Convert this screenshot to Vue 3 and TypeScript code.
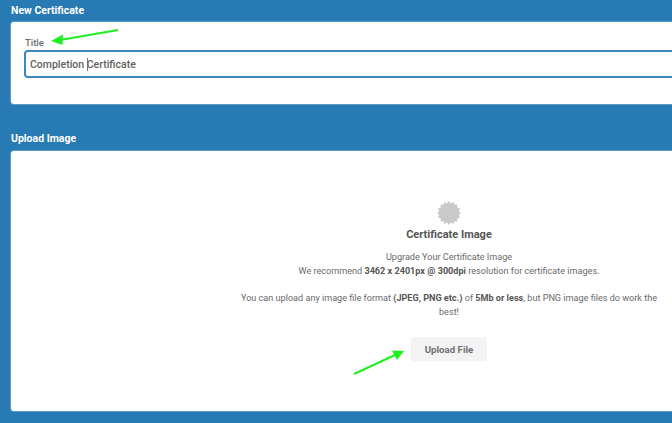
<script setup lang="ts">
const cx = 12
const cy = 12
const count = 16
const sealPoints: string = Array.from({ length: count * 2 }, (_, i) => {
  const r = i % 2 === 0 ? 12 : 9.8
  const a = (Math.PI * i) / count - Math.PI / 2
  return `${(cx + r * Math.cos(a)).toFixed(2)},${(cy + r * Math.sin(a)).toFixed(2)}`
}).join(' ')
</script>

<template>
  <div class="page">
    <h2 class="heading first">New Certificate</h2>
    <section class="card title-card">
      <label class="label">Title</label>
      <div class="input">
        <span>Completion </span><span class="caret"></span><span>Certificate</span>
      </div>
    </section>

    <h2 class="heading second">Upload Image</h2>
    <section class="card upload-card">
      <svg class="seal" width="24" height="24" viewBox="0 0 24 24">
        <polygon :points="sealPoints" fill="#c9c9c9" />
      </svg>
      <h3 class="upload-title">Certificate Image</h3>
      <p class="line">Upgrade Your Certificate Image</p>
      <p class="line">We recommend <b>3462 x 2401px @ 300dpi</b> resolution for certificate images.</p>
      <p class="line para">You can upload any image file format <b>(JPEG, PNG etc.)</b> of <b>5Mb or less</b>, but PNG image files do work the best!</p>
      <button class="upload-btn" type="button">Upload File</button>
    </section>

    <svg class="arrow-layer" width="672" height="423" viewBox="0 0 672 423">
      <g stroke="#1fee1f" fill="#1fee1f">
        <line x1="118" y1="30" x2="60" y2="40" stroke-width="2" />
        <polygon points="51,41 63,34.5 62.5,45" stroke="none" />
        <line x1="354" y1="374" x2="395" y2="355" stroke-width="2" />
        <polygon points="404,351 392,350.5 397,360" stroke="none" />
      </g>
    </svg>
  </div>
</template>

<style>
html, body { margin: 0; padding: 0; }
</style>

<style scoped>
.page {
  position: relative;
  width: 672px;
  height: 423px;
  overflow: hidden;
  background: #277ab3;
  padding-left: 11px;
  box-sizing: border-box;
  font-family: Roboto, "Liberation Sans", sans-serif;
  color: #5f5f5f;
}
.heading {
  margin: 0;
  font-size: 10.5px;
  line-height: 14px;
  font-weight: 700;
  color: #fff;
}
.first { padding-top: 4px; padding-bottom: 4px; }
.second { padding-top: 28px; padding-bottom: 5px; }
.card {
  width: 876px;
  box-sizing: border-box;
  background: #fff;
  border-radius: 3px;
  box-shadow: 0 0 0 1px rgba(255, 255, 255, 0.25);
}
.title-card {
  height: 82px;
  padding: 15px 0 0 13px;
}
.label {
  display: block;
  margin-left: 1px;
  margin-bottom: 1px;
  font-size: 9.5px;
  line-height: 12px;
  font-weight: 500;
  color: #6b6b6b;
}
.input {
  width: 850px;
  height: 28px;
  box-sizing: border-box;
  border: 2px solid #3f86b9;
  border-radius: 4px;
  padding-left: 4px;
  display: flex;
  align-items: center;
  white-space: pre;
  font-size: 10.5px;
  font-weight: 500;
  color: #616161;
}
.caret {
  width: 1px;
  height: 13px;
  margin-right: -1px;
  background: #777;
}
.upload-card {
  height: 260px;
  padding-top: 50px;
  display: flex;
  flex-direction: column;
  align-items: center;
}
.seal { display: block; flex: none; }
.upload-title {
  margin: 3px 0 8px;
  font-size: 11px;
  line-height: 14px;
  font-weight: 700;
  color: #555;
}
.line {
  margin: 0;
  width: 424px;
  text-align: center;
  font-size: 9.1px;
  line-height: 14px;
  color: #6a6a6a;
}
.line b { font-weight: 700; color: #555; }
.para { margin-top: 13px; }
.upload-btn {
  margin-top: 18px;
  width: 76px;
  height: 24px;
  border: 0;
  padding: 0;
  border-radius: 3px;
  background: #f3f3f3;
  font-family: inherit;
  font-size: 9.7px;
  font-weight: 700;
  color: #707070;
}
.arrow-layer {
  position: absolute;
  left: 0;
  top: 0;
  pointer-events: none;
}
</style>
